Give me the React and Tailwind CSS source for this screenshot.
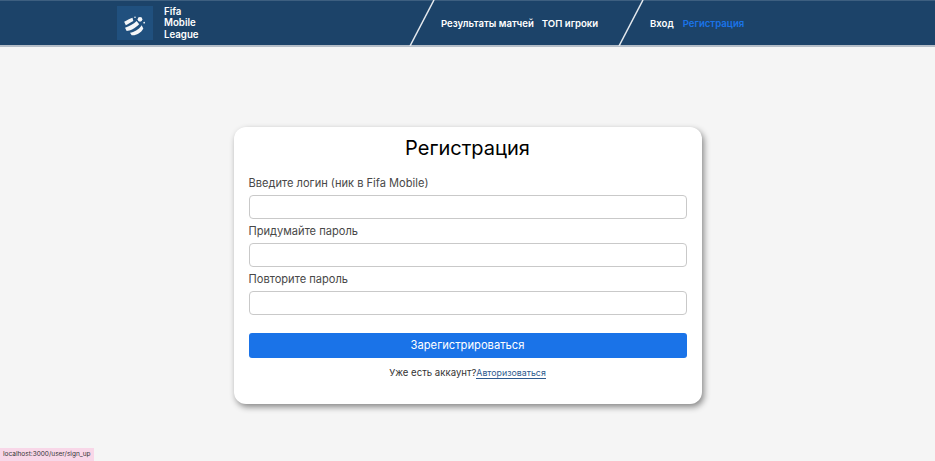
import React from 'react';

const Logo = () => (
  <div className="w-[36px] h-[34px] bg-[#20507e] flex items-center justify-center shrink-0">
    <svg width="24" height="20" viewBox="0 0 28 24" fill="none" className="mt-[5px]">
      <path d="M1 7 C4 5 8 3 11 2 L12 6 C8 8 5 10 3 11 Z" fill="#f4f6f8" />
      <path d="M2 14 C7 12 12 10 16 6 L19 10 C14 15 8 18 4 18 Z" fill="#f4f6f8" />
      <path d="M8 20 C13 19 18 17 22 11 L24 15 C21 21 14 24 10 23 Z" fill="#f4f6f8" />
      <circle cx="20" cy="4" r="2.8" fill="#f4f6f8" />
      <circle cx="14" cy="1.5" r="1" fill="#f4f6f8" />
      <circle cx="25" cy="8" r="1" fill="#f4f6f8" />
    </svg>
  </div>
);

// косая черта между секциями меню
const Slash = () => (
  <svg width="28" height="46" viewBox="0 0 28 46" className="shrink-0">
    <line x1="26" y1="0" x2="2" y2="46" stroke="#e4e9ee" strokeWidth="1.5" />
  </svg>
);

const Field = ({ label }) => (
  <div>
    <label className="block text-[11.1px] leading-[16px] text-[#484848] mb-[4px]">{label}</label>
    <input type="text" className="block w-full h-[24px] bg-white border border-[#c9c9c9] rounded-[4px]" />
  </div>
);

const App = () => {
  return (
    <div className="relative h-[461px] w-full overflow-hidden bg-[#f5f5f5] font-['Inter','Noto_Sans',sans-serif]">

      {/* Header */}
      <header className="h-[47px] bg-[#1c4369] border-t border-t-[#3d5f80] border-b-2 border-b-[#b4bdc7] flex items-center pl-[117px]">
        <Logo />
        <div className="ml-[11px] w-[244px] text-[9.7px] leading-[11.5px] font-semibold text-white">
          <div>Fifa</div>
          <div>Mobile</div>
          <div>League</div>
        </div>
        <Slash />
        <nav className="ml-[5px] flex gap-[8px] text-[9.6px] font-semibold text-white w-[176px] whitespace-nowrap pt-[2px]">
          <a>Результаты матчей</a>
          <a>ТОП игроки</a>
        </nav>
        <Slash />
        <div className="ml-[5px] flex gap-[9px] text-[9.6px] font-semibold whitespace-nowrap pt-[2px]">
          <a className="text-white">Вход</a>
          <a className="text-[#1a73e8]">Регистрация</a>
        </div>
      </header>

      {/* Form card */}
      <main className="flex justify-center pt-[80px]">
        <form className="w-[468px] h-[277px] bg-white rounded-[12px] shadow-[2px_3px_6px_rgba(0,0,0,0.45)] px-[15px] pt-[8px]">
          <h1 className="text-center text-[20px] leading-[26px] font-normal text-black mb-[14px]">Регистрация</h1>
          <div className="flex flex-col gap-[4px]">
            <Field label="Введите логин (ник в Fifa Mobile)" />
            <Field label="Придумайте пароль" />
            <Field label="Повторите пароль" />
          </div>
          <button type="button" className="mt-[18px] w-full h-[25px] bg-[#1a73e8] rounded-[3px] text-white text-[11.2px]">
            Зарегистрироваться
          </button>
          <p className="mt-[7px] text-center text-[9.6px] leading-[15px] text-[#333]">
            Уже есть аккаунт?<a className="text-[8.8px] text-[#2d5a8e] border-b border-[#2d5a8e]">Авторизоваться</a>
          </p>
        </form>
      </main>

      {/* Browser status bubble */}
      <div className="absolute left-0 bottom-0 h-[13px] w-[94px] bg-[#f8d7e8] pl-[3px] text-[6.5px] leading-[13px] text-[#333] whitespace-nowrap">
        localhost:3000/user/sign_up
      </div>
    </div>
  );
};

export default App;
